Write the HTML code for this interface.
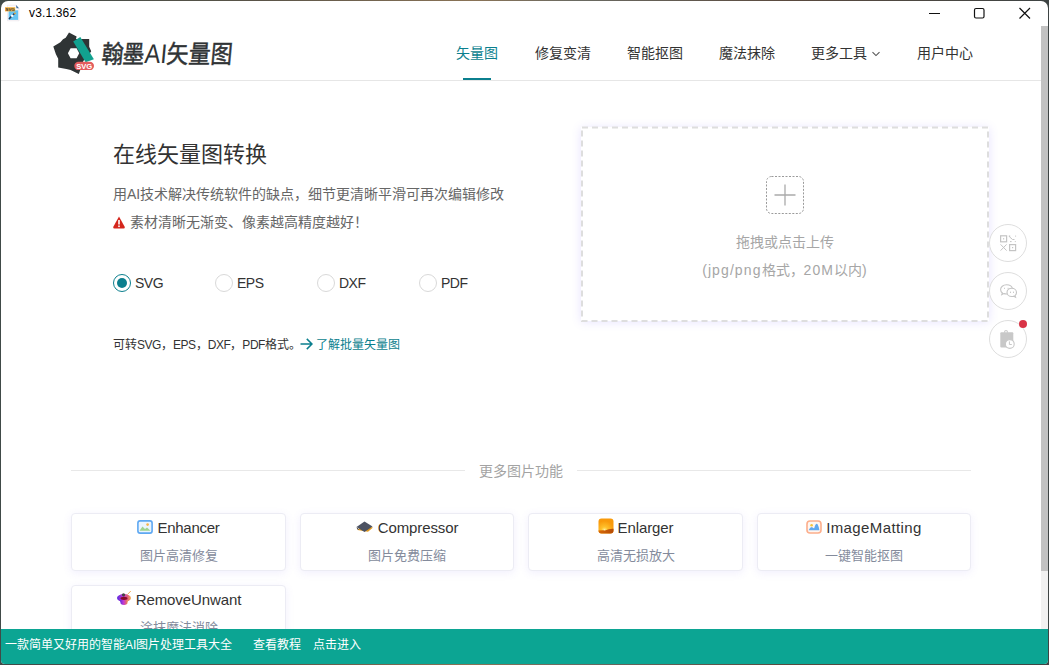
<!DOCTYPE html>
<html lang="zh-CN"><head><meta charset="utf-8">
<style>
*{margin:0;padding:0;box-sizing:border-box}
html,body{width:1049px;height:665px;overflow:hidden;background:linear-gradient(90deg,#404a48 0%,#5a5448 25%,#8a7356 45%,#6a6a62 55%,#5a4a3e 75%,#3e4444 100%);font-family:"Liberation Sans",sans-serif}
.win{position:absolute;left:1px;top:1px;width:1047px;height:663px;background:#fff;border-radius:7px 7px 4px 4px;overflow:hidden}
.in{position:absolute;left:-1px;top:-1px;width:1049px;height:665px}
.abs{position:absolute;white-space:nowrap}
.ver{left:29px;top:6px;font-size:12px;color:#000;letter-spacing:0.15px}
.hdrline{position:absolute;left:0;top:80px;width:1041px;height:1px;background:#e6e6e6}
.nav{top:45px;font-size:14px;color:#333;line-height:16px}
.nav.act{color:#0b7f8e}
.ul{position:absolute;left:463px;top:78px;width:28px;height:2px;background:#0b7f8e}
.scroll{position:absolute;left:1041px;top:26px;width:7px;height:545px;background:#c2c2c2}
.track{position:absolute;left:1041px;top:571px;width:7px;height:58px;background:#f1f1f1}
.title{left:113px;top:141px;font-size:22px;color:#333;line-height:28px}
.sub{left:113px;top:185px;font-size:14px;color:#666;line-height:18px}
.warn{left:130px;top:213px;font-size:14px;color:#666;line-height:18px}
.radio{position:absolute;width:18px;height:18px;border-radius:50%;border:1px solid #d9d9d9;top:274px}
.radio.on{border:1.5px solid #0b7f8e}
.radio.on::after{content:"";position:absolute;left:2.5px;top:2.5px;width:10px;height:10px;border-radius:50%;background:#0b7f8e}
.rl{top:274px;font-size:14px;color:#333;line-height:18px;letter-spacing:-0.5px}
.note{left:113px;top:337px;font-size:12px;color:#333;line-height:16px}
.note a{color:#0b7f8e;text-decoration:none}
.up{position:absolute;left:581px;top:127px;width:408px;height:194px;box-shadow:0 1px 9px rgba(110,90,255,.17)}
.upt{font-size:14px;color:#a6a6a6;line-height:20px;width:408px;text-align:center;left:581px}
.side{position:absolute;left:989px;width:38px;height:38px;border-radius:50%;border:1px solid #dedede;background:#fff}
.div{position:absolute;top:470px;height:1px;background:#e8e8e8}
.divt{left:479px;top:461px;font-size:14px;color:#a3a3a3;line-height:20px}
.card{position:absolute;width:215px;height:58px;border:1px solid #ececf4;border-radius:4px;background:#fff;box-shadow:0 2px 8px rgba(120,100,240,.10)}
.ct{position:absolute;left:0;width:100%;top:4px;text-align:center;font-size:15px;color:#333;line-height:20px;white-space:nowrap}
.cs{position:absolute;left:0;width:100%;top:33px;text-align:center;font-size:13px;color:#848b9c;line-height:18px;white-space:nowrap}
.ico{display:inline-block;vertical-align:-1px;margin-right:4px}
.foot{position:absolute;left:0;top:629px;width:1049px;height:36px;background:#0ca593}
.ft{top:636px;font-size:12px;color:#fff;line-height:18px}
</style></head><body>
<div class="win"><div class="in">
  <!-- title bar -->
  <svg class="abs" style="left:4px;top:4px" width="16" height="18" viewBox="0 0 16 18">
    <path d="M3.5 1.2 H12 L15 4.2 V16.8 H3.5 Z" fill="#fdfbfb" stroke="#e8e0ea" stroke-width="0.6"/>
    <path d="M12 1 L15 4.2 L12.5 4.2 Z" fill="#3b6aa0"/>
    <rect x="4.6" y="6.3" width="9.6" height="9.6" fill="#66c4f2"/>
    <rect x="1" y="3.2" width="10.2" height="4.2" fill="#f5b443"/>
    <text x="6.1" y="6.9" font-size="4.4" font-weight="bold" fill="#333" text-anchor="middle" font-family="Liberation Sans">SVG</text>
    <path d="M5 15 L7.5 12.2 L10.5 9.5" stroke="#1d3a5c" stroke-width="1.6"/>
    <circle cx="8.2" cy="11.8" r="1.3" fill="#fff"/>
    <circle cx="11" cy="9.3" r="0.9" fill="#f1a531"/>
  </svg>
  <div class="abs ver">v3.1.362</div>
  <svg class="abs" style="left:925px;top:6px" width="110" height="16" viewBox="0 0 110 16">
    <path d="M4 7.5 H15" stroke="#111" stroke-width="1.2"/>
    <rect x="49.5" y="2.5" width="9.5" height="9.5" rx="1.5" fill="none" stroke="#111" stroke-width="1.2"/>
    <path d="M94.5 2 L105 12.5 M105 2 L94.5 12.5" stroke="#111" stroke-width="1.2"/>
  </svg>
  <div class="scroll"></div><div class="track"></div>

  <!-- header -->
  <svg class="abs" style="left:48px;top:28px" width="52" height="50" viewBox="0 0 52 50">
    <path d="M21 4.4 L28.6 8.6 L28 11 L41.2 11 L41.2 18.8 L43.2 23.3 L40 28 L35.3 33 L33 40 L30.8 45.9 L22.6 42.1 L18.4 41 L10.2 39.5 L10.2 30.8 L7.9 26.3 L5.3 18.4 L12.4 14.3 L15 11.3 L17.7 9.8 Z" fill="#2f3435"/>
    <path d="M19.9 25.2 L22.6 20.3 L28.6 20.3 L31.2 25.2 L28.6 30.2 L22.6 30.2 Z" fill="#fff"/>
    <path d="M25.2 13.5 L32.3 9 L45.9 31.2 L37.6 34.2 Z" fill="#12a18f"/>
    <rect x="26.3" y="33.8" width="19.7" height="8.3" rx="4.15" fill="#e35c5d"/>
    <text x="36.2" y="40.7" font-size="7.6" font-weight="bold" fill="#fff" text-anchor="middle" font-family="Liberation Sans">SVG</text>
  </svg>
  <div class="abs" style="left:103px;top:37px;font-size:25px;line-height:34px;color:#2f3335;font-weight:normal;-webkit-text-stroke:0.5px #2f3335;transform-origin:0 0;transform:scaleX(0.87) skewX(-6deg);letter-spacing:0px">翰墨<span style="font-size:27px;-webkit-text-stroke:0">AI</span>矢量图</div>

  <div class="abs nav act" style="left:456px">矢量图</div>
  <div class="ul"></div>
  <div class="abs nav" style="left:535px">修复变清</div>
  <div class="abs nav" style="left:627px">智能抠图</div>
  <div class="abs nav" style="left:719px">魔法抹除</div>
  <div class="abs nav" style="left:811px">更多工具</div><svg class="abs" style="left:871px;top:51px" width="10" height="6" viewBox="0 0 10 6"><path d="M1.5 1.2 L5 4.6 L8.5 1.2" fill="none" stroke="#555" stroke-width="1.1"/></svg>
  <div class="abs nav" style="left:917px">用户中心</div>
  <div class="hdrline"></div>

  <!-- left content -->
  <div class="abs title">在线矢量图转换</div>
  <div class="abs sub">用AI技术解决传统软件的缺点，细节更清晰平滑可再次编辑修改</div>
  <svg class="abs" style="left:113px;top:216px" width="12" height="13" viewBox="0 0 12 13">
    <path d="M6 0.5 L11.8 11 Q12 12.5 10.5 12.5 L1.5 12.5 Q0 12.5 0.2 11 Z" fill="#d4261c"/>
    <rect x="5.2" y="4" width="1.6" height="4.5" fill="#fff"/><rect x="5.2" y="9.5" width="1.6" height="1.6" fill="#fff"/>
  </svg>
  <div class="abs warn">素材清晰无渐变、像素越高精度越好！</div>

  <div class="radio on" style="left:113px"></div><div class="abs rl" style="left:135px">SVG</div>
  <div class="radio" style="left:215px"></div><div class="abs rl" style="left:237px">EPS</div>
  <div class="radio" style="left:317px"></div><div class="abs rl" style="left:339px">DXF</div>
  <div class="radio" style="left:419px"></div><div class="abs rl" style="left:441px">PDF</div>

  <div class="abs note">可转<span style="letter-spacing:-0.45px">SVG</span>，<span style="letter-spacing:-0.45px">EPS</span>，<span style="letter-spacing:-0.45px">DXF</span>，<span style="letter-spacing:-0.45px">PDF</span>格式。<a><svg width="13" height="12" viewBox="0 0 13 12" style="vertical-align:-1px;margin-right:3px;margin-left:-1px"><path d="M0.5 6 H12 M6.8 0.9 L12 6 L6.8 11.1" fill="none" stroke="#0b7f8e" stroke-width="1.5"/></svg>了解批量矢量图</a></div>

  <!-- upload -->
  <div class="up"></div>
  <svg class="abs" style="left:580px;top:125px" width="411" height="199" viewBox="0 0 411 199">
    <rect x="2" y="2.5" width="406" height="193.5" fill="none" stroke="#dedede" stroke-width="2" stroke-dasharray="6 4"/>
  </svg>
  <svg class="abs" style="left:766px;top:176px" width="38" height="38" viewBox="0 0 38 38">
    <rect x="0.5" y="0.5" width="37" height="37" rx="5" fill="none" stroke="#9a9a9a" stroke-width="1" stroke-dasharray="2 1.5"/>
    <path d="M19 8.5 V29.5 M8.5 19 H29.5" stroke="#aaa" stroke-width="1.3"/>
  </svg>
  <div class="abs upt" style="top:232px">拖拽或点击上传</div>
  <div class="abs upt" style="top:260px"><span style="letter-spacing:1.1px">(jpg/png</span>格式，<span style="letter-spacing:1.1px">20M</span>以内<span style="letter-spacing:1.1px">)</span></div>

  <div class="side" style="top:224px"><svg width="36" height="36" viewBox="0 0 36 36" style="position:absolute;left:0;top:0">
    <g fill="none" stroke="#c4c4c4" stroke-width="1.2">
      <rect x="10.6" y="10.8" width="6" height="6"/><rect x="19.6" y="19.6" width="6" height="6"/>
      <path d="M19.2 11.5 L22.5 14.5 L24.5 14.5 M20 16.6 L21.6 16.6 M24.8 16.6 L25.8 16.6 M25.6 10.6 L25.6 11.6 M10.6 19.4 L16.6 25.6 M16.6 19.4 L10.6 25.6" stroke-width="1"/>
    </g>
    <g fill="#c4c4c4"><rect x="13" y="13.2" width="1.2" height="1.2"/><rect x="22" y="22" width="1.2" height="1.2"/><rect x="18.8" y="10.5" width="1.4" height="1.4"/></g>
  </svg></div>
  <div class="side" style="top:272px"><svg width="36" height="36" viewBox="0 0 36 36" style="position:absolute;left:0;top:0">
    <g fill="#fff" stroke="#c4c4c4" stroke-width="1.1">
      <path d="M16.5 11.8 c-3.4 0 -5.9 2.2 -5.9 4.8 c0 1.4 0.7 2.6 1.8 3.4 l-0.6 1.6 l2.1 -1 c0.8 0.2 1.7 0.4 2.6 0.4 c3.4 0 5.9 -2.2 5.9 -4.8 c0 -2.6 -2.5 -4.4 -5.9 -4.4z"/>
      <path d="M21.8 15.3 c-2.7 0 -4.8 1.9 -4.8 4.1 c0 2.3 2.1 4.1 4.8 4.1 c0.7 0 1.3 -0.1 1.9 -0.3 l1.8 0.9 l-0.5 -1.4 c0.9 -0.8 1.5 -1.9 1.5 -3.2 c0 -2.3 -2 -4.2 -4.7 -4.2z"/>
    </g>
    <g fill="#c4c4c4"><rect x="14" y="14.8" width="1" height="1"/><rect x="17.6" y="14.8" width="1" height="1"/><rect x="20" y="18.6" width="0.9" height="1.4"/><rect x="23" y="18.6" width="0.9" height="1.4"/></g>
  </svg></div>
  <div class="side" style="top:320px"><svg width="36" height="36" viewBox="0 0 36 36" style="position:absolute;left:0;top:0">
    <rect x="10.3" y="11.2" width="13" height="15.2" rx="1" fill="#c8c8c8"/>
    <circle cx="16" cy="10.8" r="1.9" fill="#c8c8c8"/><circle cx="16" cy="10.8" r="0.8" fill="#fff"/>
    <circle cx="19.8" cy="23" r="4.4" fill="#fff" stroke="#c8c8c8" stroke-width="1.1"/>
    <path d="M19.4 20.4 V23.5 H21.8" fill="none" stroke="#c8c8c8" stroke-width="1"/>
  </svg></div>
  <div class="abs" style="left:1019px;top:320px;width:8px;height:8px;border-radius:50%;background:#d93346"></div>

  <!-- more -->
  <div class="div" style="left:71px;width:394px"></div>
  <div class="div" style="left:577px;width:394px"></div>
  <div class="abs divt">更多图片功能</div>

  <div class="card" style="left:71px;top:513px"><div class="ct"><svg class="ico" width="16" height="14" viewBox="0 0 16 14"><rect x="0.9" y="0.9" width="14.2" height="12.2" rx="2.2" fill="#eaf5ff" stroke="#5ea8f2" stroke-width="1.6"/><path d="M2.5 10.8 L5.5 6.5 L8 9 L10 7.5 L13.5 10.8 Z" fill="#9fd38f"/><circle cx="10.6" cy="4.6" r="1.3" fill="#f6b44a"/></svg><span style="letter-spacing:-0.25px">Enhancer</span></div><div class="cs">图片高清修复</div></div>
  <div class="card" style="left:300px;top:513px;width:214px"><div class="ct"><svg class="ico" width="18" height="13" viewBox="0 0 18 13"><path d="M1.5 9 L12 10.8 L17 6.5 L6.5 4.5 Z" fill="#e39a1c"/><path d="M0.5 6 L8.5 0.5 L16.5 5.5 L8.5 11 Z" fill="#4c5262"/><path d="M0.5 6.2 L1.5 8.6 L3 8.4 Z" fill="#111"/></svg><span style="letter-spacing:-0.1px">Compressor</span></div><div class="cs">图片免费压缩</div></div>
  <div class="card" style="left:528px;top:513px"><div class="ct"><svg class="ico" width="16" height="16" viewBox="0 0 16 16"><defs><radialGradient id="sg" cx="0.4" cy="0.78" r="0.62"><stop offset="0" stop-color="#ffffff"/><stop offset="0.12" stop-color="#ffe070"/><stop offset="0.35" stop-color="#ffc02a"/><stop offset="1" stop-color="#f99a0b"/></radialGradient><linearGradient id="hg" x1="0" y1="0" x2="1" y2="0"><stop offset="0" stop-color="#d86a08"/><stop offset="1" stop-color="#b44a06"/></linearGradient></defs><rect x="0.5" y="0.5" width="15" height="15" rx="3" fill="url(#sg)"/><path d="M0.5 12.6 Q5 12 7 12.4 Q11 10.6 15.5 10.8 L15.5 12.5 Q15.5 15.5 12.5 15.5 L3.5 15.5 Q0.5 15.5 0.5 12.5 Z" fill="url(#hg)"/></svg><span style="letter-spacing:-0.1px">Enlarger</span></div><div class="cs">高清无损放大</div></div>
  <div class="card" style="left:757px;top:513px;width:214px"><div class="ct"><svg class="ico" width="16" height="14" viewBox="0 0 16 14"><rect x="1" y="1" width="14" height="12" rx="3" fill="#fff6f0" stroke="#fcae8c" stroke-width="1.6"/><path d="M2.6 10.2 Q4 7 6 7 Q7.5 8.5 8.2 8.2 Q9.5 3.5 11 3.8 Q12.5 5 13.4 10.2 Z" fill="#5fa9f0"/><circle cx="5.6" cy="5.3" r="1.3" fill="#f5c640"/></svg><span style="letter-spacing:0.4px">ImageMatting</span></div><div class="cs">一键智能抠图</div></div>
  <div class="card" style="left:71px;top:585px"><div class="ct"><svg class="ico" width="16" height="16" viewBox="0 0 16 16"><defs><linearGradient id="rg" x1="0" y1="0" x2="1" y2="0"><stop offset="0" stop-color="#5a2be0"/><stop offset="0.45" stop-color="#c23ad0"/><stop offset="0.75" stop-color="#e0607a"/><stop offset="1" stop-color="#f0b050"/></linearGradient></defs><path d="M11.5 4.5 L14.8 1" stroke="#f3b060" stroke-width="1"/><ellipse cx="8" cy="8" rx="7" ry="4" fill="url(#rg)"/><path d="M3.8 10 L4.8 14 Q8 16 11.2 14 L12.2 10 Z" fill="url(#rg)"/><ellipse cx="8" cy="8.3" rx="3.5" ry="1.6" fill="#8a0a2a"/><circle cx="7.5" cy="4.8" r="1.6" fill="#444"/></svg><span style="letter-spacing:-0.1px">RemoveUnwant</span></div><div class="cs">涂抹魔法消除</div></div>

  <div class="foot"></div>
  <div class="abs ft" style="left:5px">一款简单又好用的智能AI图片处理工具大全</div>
  <div class="abs ft" style="left:253px">查看教程</div>
  <div class="abs ft" style="left:313px">点击进入</div>
</div></div>
</body></html>
